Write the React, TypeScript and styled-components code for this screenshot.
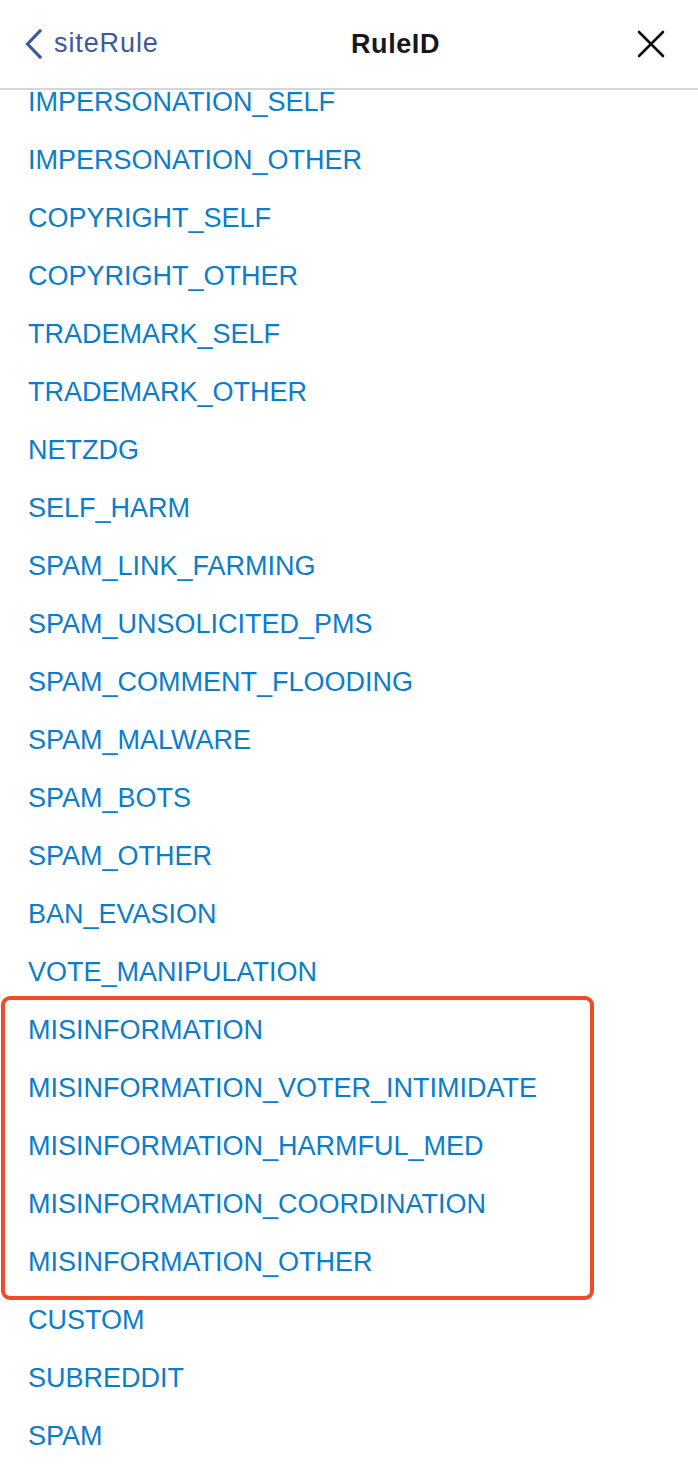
import React from "react";
import styled, { createGlobalStyle } from "styled-components";

const rulesBefore = [
  "IMPERSONATION_SELF",
  "IMPERSONATION_OTHER",
  "COPYRIGHT_SELF",
  "COPYRIGHT_OTHER",
  "TRADEMARK_SELF",
  "TRADEMARK_OTHER",
  "NETZDG",
  "SELF_HARM",
  "SPAM_LINK_FARMING",
  "SPAM_UNSOLICITED_PMS",
  "SPAM_COMMENT_FLOODING",
  "SPAM_MALWARE",
  "SPAM_BOTS",
  "SPAM_OTHER",
  "BAN_EVASION",
  "VOTE_MANIPULATION",
];

const highlighted = [
  "MISINFORMATION",
  "MISINFORMATION_VOTER_INTIMIDATE",
  "MISINFORMATION_HARMFUL_MED",
  "MISINFORMATION_COORDINATION",
  "MISINFORMATION_OTHER",
];

const rulesAfter = ["CUSTOM", "SUBREDDIT", "SPAM"];

const App = () => {
  return (
    <>
      <GlobalStyle />
      <Screen>
        <Header>
          <BackButton>
            <svg width="20" height="30" viewBox="0 0 20 30">
              <path
                d="M16 2 L3.5 15 L16 28"
                fill="none"
                stroke="#3d5a9c"
                strokeWidth="3.2"
                strokeLinecap="square"
                strokeLinejoin="miter"
              />
            </svg>
            <span>siteRule</span>
          </BackButton>
          <Title>RuleID</Title>
          <CloseButton>
            <svg width="28" height="28" viewBox="0 0 28 28">
              <path
                d="M2 2 L26 26 M26 2 L2 26"
                stroke="#111"
                strokeWidth="2.6"
                strokeLinecap="round"
              />
            </svg>
          </CloseButton>
        </Header>
        <ListViewport>
          <List>
            {rulesBefore.map((r) => (
              <Row key={r}>{r}</Row>
            ))}
            <Highlight>
              {highlighted.map((r) => (
                <Row key={r}>{r}</Row>
              ))}
            </Highlight>
            {rulesAfter.map((r) => (
              <Row key={r}>{r}</Row>
            ))}
          </List>
        </ListViewport>
      </Screen>
    </>
  );
};

export default App;

const GlobalStyle = createGlobalStyle`
  html, body {
    margin: 0;
    padding: 0;
    background: #ffffff;
  }
  body {
    font-family: "Liberation Sans", Arial, sans-serif;
  }
`;

const Screen = styled.div`
  width: 698px;
  height: 1480px;
  background: #fff;
  display: flex;
  flex-direction: column;
  overflow: hidden;
`;

const Header = styled.div`
  height: 88px;
  flex-shrink: 0;
  display: grid;
  grid-template-columns: 1fr auto 1fr;
  align-items: center;
  border-bottom: 2px solid #d6d6d6;
  padding: 0 33px 0 24px;
  position: relative;
  z-index: 1;
  background: #fff;
`;

const BackButton = styled.div`
  display: flex;
  align-items: center;
  gap: 10px;
  color: #3d5a9c;
  font-size: 27px;
  letter-spacing: 0.9px;
  margin-top: -1px;
  svg {
    display: block;
  }
`;

const Title = styled.div`
  font-size: 27px;
  font-weight: 700;
  letter-spacing: 0.6px;
  color: #16181d;
  margin-left: 102px;
`;

const CloseButton = styled.div`
  justify-self: end;
  display: flex;
  svg {
    display: block;
  }
`;

const ListViewport = styled.div`
  flex: 1;
  overflow: hidden;
`;

const List = styled.div`
  margin-top: -17px;
  display: flex;
  flex-direction: column;
`;

const Row = styled.div`
  height: 58px;
  display: flex;
  align-items: center;
  padding-left: 28px;
  font-size: 27px;
  color: #0a7dcb;
`;

const Highlight = styled.div`
  position: relative;
  display: flex;
  flex-direction: column;

  &::after {
    content: "";
    position: absolute;
    left: 1px;
    width: 593px;
    top: -5px;
    bottom: -9px;
    border: 4px solid #f24a25;
    border-radius: 9px;
    box-sizing: border-box;
    pointer-events: none;
  }
`;
